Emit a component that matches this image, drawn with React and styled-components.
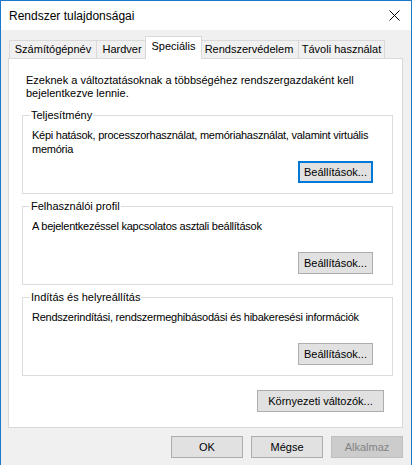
import React from 'react';
import styled, { createGlobalStyle, css } from 'styled-components';

const GlobalStyle = createGlobalStyle`
  html, body {
    margin: 0;
    padding: 0;
    background: #ffffff;
  }
  body {
    font-family: "Liberation Sans", Arial, sans-serif;
    font-size: 11px;
    color: #000000;
  }
`;

const Window = styled.div`
  width: 412px;
  height: 465px;
  box-sizing: border-box;
  border: 1px solid #1979ca;
  border-bottom: none;
  display: flex;
  flex-direction: column;
  background: #f0f0f0;
  overflow: hidden;
`;

const TitleBar = styled.div`
  height: 29px;
  flex-shrink: 0;
  background: #ffffff;
  display: flex;
  align-items: center;
  justify-content: space-between;
  padding: 0 11px 0 8px;
`;

const Title = styled.span`
  font-size: 12px;
  line-height: 14px;
`;

const CloseIcon = () => (
  <svg width="11" height="11" viewBox="0 0 11 11">
    <path d="M0.5 0.5 L10.5 10.5 M10.5 0.5 L0.5 10.5" stroke="#000" strokeWidth="1" fill="none" />
  </svg>
);

const Body = styled.div`
  flex: 1;
  display: flex;
  flex-direction: column;
  padding: 6px 8px 0 7px;
`;

const TabRow = styled.div`
  display: flex;
  align-items: flex-end;
  height: 22px;
  padding-left: 2px;
  position: relative;
  z-index: 1;
`;

const Tab = styled.div`
  box-sizing: border-box;
  width: ${({ $w }) => $w}px;
  height: 18px;
  margin-left: -1px;
  border: 1px solid #d9d9d9;
  border-bottom: none;
  background: #f0f0f0;
  display: flex;
  align-items: center;
  justify-content: center;
  line-height: 13px;
  white-space: nowrap;

  ${({ $active }) =>
    $active &&
    css`
      height: 23px;
      margin: 0 -2px -1px -3px;
      background: #ffffff;
      position: relative;
      align-items: flex-start;
      padding-top: 3px;
    `}
`;

const Panel = styled.div`
  box-sizing: border-box;
  height: 370px;
  background: #ffffff;
  border: 1px solid #d9d9d9;
  padding: 15px 9px 0 13px;
  display: flex;
  flex-direction: column;
`;

const Intro = styled.p`
  margin: 0 0 9px 4px;
  line-height: 13px;
`;

const Group = styled.fieldset`
  margin: 0 0 6px 0;
  padding: 6px 19px 10px 9px;
  border: 1px solid #dcdcdc;
  min-inline-size: 0;
`;

const Legend = styled.legend`
  padding: 0 1px;
  margin-left: -2px;
  line-height: 13px;
`;

const GroupBody = styled.div`
  height: 55px;
  display: flex;
  flex-direction: column;
`;

const GroupText = styled.div`
  line-height: 14px;
  letter-spacing: -0.25px;
  margin-right: -18px;
`;

const Button = styled.button`
  box-sizing: border-box;
  width: ${({ $w }) => $w || 75}px;
  height: 22px;
  padding: 0;
  font-family: inherit;
  font-size: 11px;
  color: #000000;
  background: #e1e1e1;
  border: 1px solid #adadad;
  border-radius: 0;
  line-height: 13px;

  ${({ $focused }) =>
    $focused &&
    css`
      border: 2px solid #0078d7;
    `}

  ${({ $disabled }) =>
    $disabled &&
    css`
      background: #cccccc;
      border-color: #bfbfbf;
      color: #838383;
    `}
`;

const GroupButton = styled(Button)`
  margin-top: auto;
  align-self: flex-end;
`;

const EnvRow = styled.div`
  display: flex;
  justify-content: flex-end;
  margin-top: 8px;
  padding-right: 9px;
`;

const Footer = styled.div`
  display: flex;
  justify-content: flex-end;
  gap: 8px;
  margin-top: 8px;
`;

const tabs = [
  { label: 'Számítógépnév', w: 88 },
  { label: 'Hardver', w: 52 },
  { label: 'Speciális', w: 57, active: true },
  { label: 'Rendszervédelem', w: 100 },
  { label: 'Távoli használat', w: 87 },
];

const groups = [
  {
    title: 'Teljesítmény',
    text: 'Képi hatások, processzorhasználat, memóriahasználat, valamint virtuális memória',
    focused: true,
  },
  {
    title: 'Felhasználói profil',
    text: 'A bejelentkezéssel kapcsolatos asztali beállítások',
  },
  {
    title: 'Indítás és helyreállítás',
    text: 'Rendszerindítási, rendszermeghibásodási és hibakeresési információk',
  },
];

const App = () => {
  return (
    <>
      <GlobalStyle />
      <Window>
        <TitleBar>
          <Title>Rendszer tulajdonságai</Title>
          <CloseIcon />
        </TitleBar>
        <Body>
          <TabRow>
            {tabs.map((t) => (
              <Tab key={t.label} $w={t.w} $active={t.active}>
                {t.label}
              </Tab>
            ))}
          </TabRow>
          <Panel>
            <Intro>
              Ezeknek a változtatásoknak a többségéhez rendszergazdaként kell bejelentkezve lennie.
            </Intro>
            {groups.map((g) => (
              <Group key={g.title}>
                <Legend>{g.title}</Legend>
                <GroupBody>
                  <GroupText>{g.text}</GroupText>
                  <GroupButton $focused={g.focused}>Beállítások...</GroupButton>
                </GroupBody>
              </Group>
            ))}
            <EnvRow>
              <Button $w={127}>Környezeti változók...</Button>
            </EnvRow>
          </Panel>
          <Footer>
            <Button $w={72}>OK</Button>
            <Button $w={72}>Mégse</Button>
            <Button $w={72} $disabled>Alkalmaz</Button>
          </Footer>
        </Body>
      </Window>
    </>
  );
};

export default App;
